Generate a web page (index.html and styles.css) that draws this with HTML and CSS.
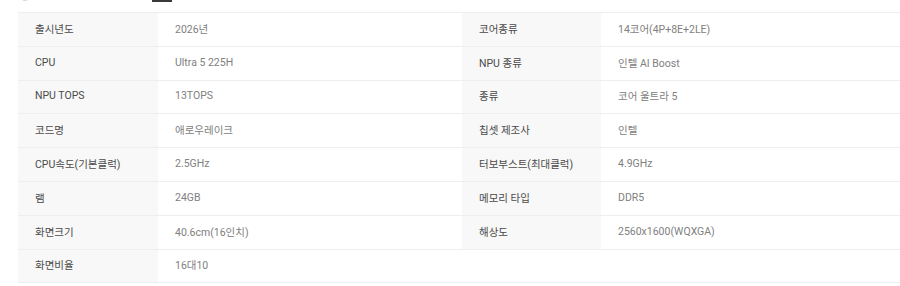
FILE: index.html
```html
<!DOCTYPE html>
<html lang="ko">
<head>
<meta charset="utf-8">
<title>제품 사양</title>
<link rel="stylesheet" href="styles.css">
</head>
<body>
<div class="top">
  <span class="dot"></span>
  <span class="mark"></span>
</div>
<div class="spec">
  <div class="lbl">출시년도</div><div class="val">2026년</div>
  <div class="lbl">코어종류</div><div class="val">14코어(4P+8E+2LE)</div>

  <div class="lbl">CPU</div><div class="val">Ultra 5 225H</div>
  <div class="lbl">NPU 종류</div><div class="val">인텔 AI Boost</div>

  <div class="lbl">NPU TOPS</div><div class="val">13TOPS</div>
  <div class="lbl">종류</div><div class="val">코어 울트라 5</div>

  <div class="lbl">코드명</div><div class="val">애로우레이크</div>
  <div class="lbl">칩셋 제조사</div><div class="val">인텔</div>

  <div class="lbl">CPU속도(기본클럭)</div><div class="val">2.5GHz</div>
  <div class="lbl">터보부스트(최대클럭)</div><div class="val">4.9GHz</div>

  <div class="lbl">램</div><div class="val">24GB</div>
  <div class="lbl">메모리 타입</div><div class="val">DDR5</div>

  <div class="lbl">화면크기</div><div class="val">40.6cm(16인치)</div>
  <div class="lbl">해상도</div><div class="val">2560x1600(WQXGA)</div>

  <div class="lbl">화면비율</div><div class="val">16대10</div>
  <div class="empty"></div><div class="empty"></div>
</div>
</body>
</html>
```
FILE: styles.css
```css
html, body {
  margin: 0;
  padding: 0;
  background: #fff;
  overflow: hidden;
}
body {
  font-family: Roboto, "Noto Sans CJK KR", sans-serif;
  font-size: 10.5px;
}
.top {
  height: 12px;
  display: flex;
  align-items: flex-start;
  padding-left: 20px;
  overflow: hidden;
}
.dot {
  width: 10px;
  height: 10px;
  margin-top: -9px;
  border-radius: 50%;
  background: #d9d9d9;
}
.mark {
  width: 20px;
  height: 2px;
  margin-left: 122px;
  background: #3a3a3a;
}
.spec {
  margin-left: 18px;
  display: grid;
  grid-template-columns: 140px 304px 139px 1fr;
  grid-auto-rows: 33.8px;
  border-top: 1px solid #eeeeee;
}
.spec > div {
  display: flex;
  align-items: center;
  padding-bottom: 2px;
  border-bottom: 1px solid #eeeeee;
}
.lbl {
  background: #f8f8f8;
  color: #4a4a4a;
  padding-left: 17px;
}
.val {
  background: #fff;
  color: #808080;
  padding-left: 17px;
}
.empty {
  background: #fff;
}
```
